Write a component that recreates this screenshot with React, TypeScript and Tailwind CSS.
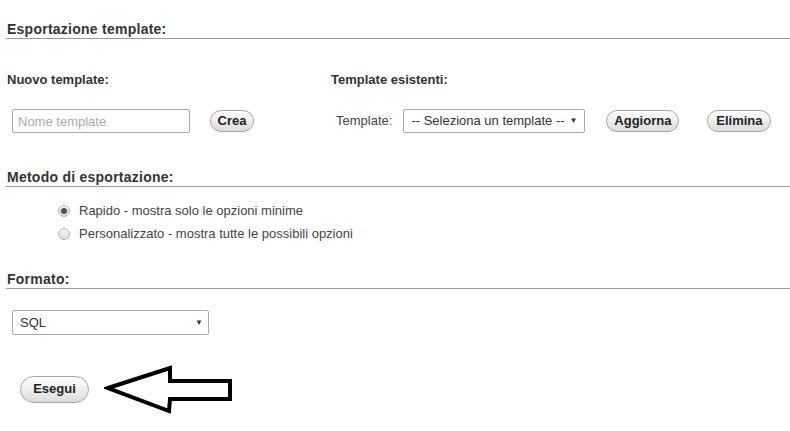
import React, { useState } from "react";

const font = { fontFamily: '"Liberation Sans", Arial, sans-serif' };

const Heading = ({ children }: { children: React.ReactNode }) => (
  <div className="border-b border-[#999] pb-[1px] pl-[1px] text-[14px] leading-[15px] font-bold tracking-[0.25px] text-[#333]">
    {children}
  </div>
);

const PillButton = ({
  children,
  className = "",
}: {
  children: React.ReactNode;
  className?: string;
}) => (
  <button
    className={`rounded-full border border-[#a6a6a6] bg-gradient-to-b from-[#ffffff] to-[#dcdcdc] text-[13px] font-bold text-[#222] shadow-[inset_0_1px_0_#fff] ${className}`}
  >
    {children}
  </button>
);

const Radio = ({ checked }: { checked: boolean }) => (
  <span className="flex h-[12px] w-[12px] items-center justify-center rounded-full border border-[#b5b5b5] bg-gradient-to-b from-[#f4f4f4] to-[#dedede]">
    {checked && <span className="h-[6px] w-[6px] rounded-full bg-[#555]" />}
  </span>
);

const Arrow = () => (
  <svg width="134" height="52" viewBox="0 0 134 52" className="block">
    <polygon
      points="4,25 66,5 66,18 126,18 126,36 66,36 65,48"
      fill="#fff"
      stroke="#000"
      strokeWidth="4"
      strokeLinejoin="miter"
    />
  </svg>
);

export default function App() {
  const [method, setMethod] = useState("rapido");

  return (
    <div className="min-h-[431px] w-[790px] bg-white text-[#444]" style={font}>
      <div className="pt-[22px] pl-[6px]">
        <Heading>Esportazione template:</Heading>

        <div className="mt-[34px] flex">
          <div className="w-[325px]">
            <div className="pl-[1px] text-[13px] leading-[14px] font-bold text-[#333]">
              Nuovo template:
            </div>
            <div className="mt-[22px] flex items-center pl-[6px]">
              <input
                type="text"
                placeholder="Nome template"
                className="h-[24px] w-[178px] rounded-[2px] border border-[#aaa] px-[5px] text-[13px] text-[#333] placeholder:text-[#a9a9a9] focus:outline-none"
              />
              <PillButton className="ml-[20px] h-[22px] w-[44px]">Crea</PillButton>
            </div>
          </div>

          <div>
            <div className="text-[13px] leading-[14px] font-bold text-[#333]">
              Template esistenti:
            </div>
            <div className="mt-[22px] flex items-center pl-[5px]">
              <span className="text-[13px] text-[#444]">Template:</span>
              <div className="ml-[11px] flex h-[24px] w-[182px] items-center justify-between rounded-[2px] border border-[#aaa] pr-[7px] pl-[7px] text-[13px] text-[#333]">
                <span>-- Seleziona un template --</span>
                <span className="text-[8px]">▼</span>
              </div>
              <PillButton className="ml-[21px] h-[22px] w-[73px]">Aggiorna</PillButton>
              <PillButton className="ml-[28px] h-[22px] w-[64px]">Elimina</PillButton>
            </div>
          </div>
        </div>

        <div className="mt-[37px]">
          <Heading>Metodo di esportazione:</Heading>
        </div>

        <div className="mt-[16px] flex flex-col gap-[8px] pl-[52px] text-[13px] leading-[15px]">
          <label className="flex items-center gap-[9px]" onClick={() => setMethod("rapido")}>
            <Radio checked={method === "rapido"} />
            <span>Rapido - mostra solo le opzioni minime</span>
          </label>
          <label className="flex items-center gap-[9px]" onClick={() => setMethod("custom")}>
            <Radio checked={method === "custom"} />
            <span>Personalizzato - mostra tutte le possibili opzioni</span>
          </label>
        </div>

        <div className="mt-[31px]">
          <Heading>Formato:</Heading>
        </div>

        <div className="mt-[21px] pl-[6px]">
          <div className="flex h-[25px] w-[197px] items-center justify-between rounded-[2px] border border-[#aaa] pr-[5px] pl-[7px] text-[13px] text-[#333]">
            <span>SQL</span>
            <span className="text-[8px]">▼</span>
          </div>
        </div>

        <div className="mt-[28px] flex items-center pl-[14px]">
          <PillButton className="h-[27px] w-[69px]">Esegui</PillButton>
          <div className="ml-[15px]">
            <Arrow />
          </div>
        </div>
      </div>
    </div>
  );
}
